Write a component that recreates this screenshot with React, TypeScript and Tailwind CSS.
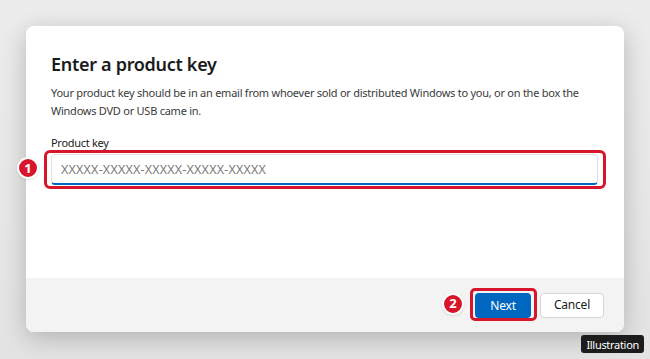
// Windows "Enter a product key" dialog with numbered callouts
const Badge = ({ n, className }: { n: number; className: string }) => (
  <div
    className={`absolute flex h-[22px] w-[22px] items-center justify-center rounded-full border-2 border-white bg-[#d7162b] text-[13px] font-bold leading-none text-white shadow ${className}`}
  >
    {n}
  </div>
);

export default function App() {
  return (
    <div className="relative h-[359px] w-[650px] overflow-hidden bg-gradient-to-b from-[#ececec] to-[#e3e3e3] pl-[26px] pt-[26px] font-['Noto_Sans',sans-serif]">
      <div className="flex h-[306px] w-[598px] flex-col rounded-[8px] bg-white shadow-[0_6px_24px_rgba(0,0,0,0.22)]">
        {/* body */}
        <div className="relative flex-1 px-[25px] pt-[24px]">
          <h1 className="text-[18px] font-semibold leading-[28px] tracking-[-0.3px] text-[#1b1b1b]">
            Enter a product key
          </h1>
          <p className="mt-[6px] whitespace-nowrap text-[11px] leading-[18px] tracking-[-0.25px] text-[#3a3a3a]">
            Your product key should be in an email from whoever sold or distributed Windows to you, or on the box the
            <br />
            Windows DVD or USB came in.
          </p>
          <label className="mt-[15px] block text-[11px] leading-[16px] tracking-[-0.3px] text-[#1b1b1b]">Product key</label>
          <div className="relative mt-[3px]">
            <input
              placeholder="XXXXX-XXXXX-XXXXX-XXXXX-XXXXX"
              className="h-[31px] w-[547px] rounded-[4px] border border-[#e0e0e0] border-b-[2px] border-b-[#0067c0] px-[9px] text-[12.5px] tracking-[0.2px] text-[#1b1b1b] outline-none placeholder:text-[#7a7a7a]"
            />
            <div className="pointer-events-none absolute -left-[7px] -top-[4px] h-[39px] w-[562px] rounded-[6px] border-[3px] border-[#d7162b]" />
          </div>
          <Badge n={1} className="left-[-9px] top-[131px]" />
        </div>
        {/* footer */}
        <div className="flex h-[54px] items-center justify-end gap-[9px] rounded-b-[8px] bg-[#f3f3f3] pr-[20px]">
          <div className="relative">
            <button className="h-[25px] w-[56px] rounded-[4px] bg-[#0067c0] text-[12px] tracking-[-0.2px] text-white">Next</button>
            <div className="pointer-events-none absolute -left-[5px] -top-[4px] h-[33px] w-[67px] rounded-[5px] border-[3px] border-[#d7162b]" />
            <Badge n={2} className="left-[-33px] top-[1px]" />
          </div>
          <button className="h-[25px] w-[64px] rounded-[4px] border border-[#d6d6d6] bg-white text-[12px] tracking-[-0.2px] text-[#1b1b1b]">
            Cancel
          </button>
        </div>
      </div>
      <div className="absolute bottom-[6px] right-[6px] flex h-[18px] items-center rounded-[3px] bg-[#1c1c1c] px-[5px] text-[11px] leading-none tracking-[-0.3px] text-white">
        Illustration
      </div>
    </div>
  );
}
